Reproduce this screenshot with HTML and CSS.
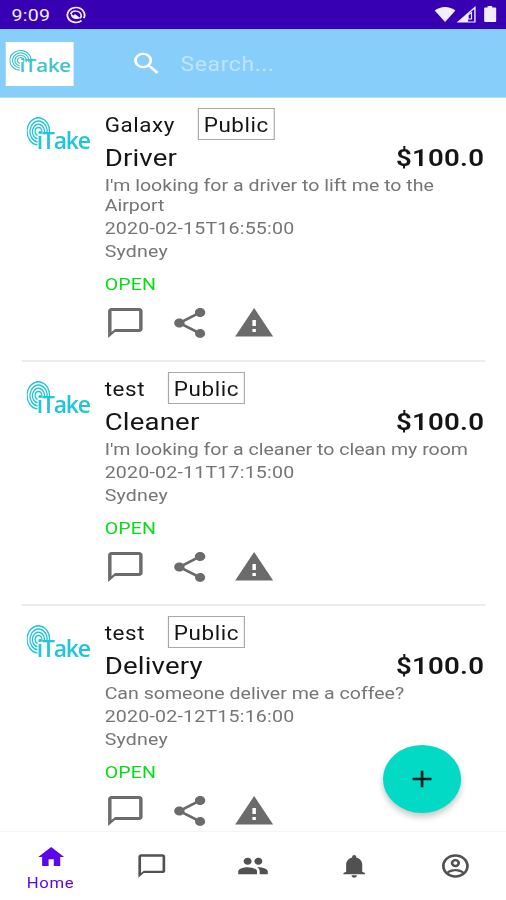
FILE: index.html
```html
<!DOCTYPE html>
<html lang="en">
<head>
<meta charset="utf-8">
<title>iTake</title>
<link rel="stylesheet" href="styles.css">
</head>
<body>
<svg class="defs" aria-hidden="true">
  <symbol id="chat" viewBox="0 0 24 24"><path d="M20 2H4c-1.100 0-2 .9-2 2v18l4-4h14c1.100 0 2-.9 2-2V4c0-1.100-.9-2-2-2zm0 14H6l-2 2V4h16v12z"/></symbol>
  <symbol id="share" viewBox="0 0 24 24"><path d="M18 16.080c-.76 0-1.440.3-1.960.77L8.910 12.700c.05-.23.09-.46.09-.7s-.04-.47-.09-.7l7.050-4.110c.54.5 1.250.81 2.040.81 1.660 0 3-1.340 3-3s-1.340-3-3-3-3 1.340-3 3c0 .24.04.47.09.7L8.040 9.810C7.500 9.310 6.790 9 6 9c-1.660 0-3 1.340-3 3s1.340 3 3 3c.79 0 1.500-.31 2.040-.81l7.120 4.160c-.05.21-.08.43-.08.65 0 1.610 1.310 2.920 2.920 2.920s2.920-1.310 2.920-2.920-1.310-2.920-2.920-2.920z"/></symbol>
  <symbol id="warning" viewBox="0 0 24 24"><path d="M1 21h22L12 2 1 21zm12-3h-2v-2h2v2zm0-4h-2v-4h2v4z"/></symbol>
  <symbol id="rings" viewBox="0 0 24 24" preserveAspectRatio="none"><g fill="none" stroke="currentColor" stroke-width="1.300"><path d="M11 23A11.200 11.200 0 1 1 22.800 14"/><path d="M11 20.500A8.600 8.600 0 1 1 20.400 14"/><path d="M11 18A6 6 0 1 1 17.600 14"/><path d="M11 15.300A3.400 3.400 0 1 1 15 13.600"/></g></symbol>
</svg>
<div class="screen">
  <header class="status">
    <span class="time">9:09</span>
    <svg class="dnd" viewBox="0 0 20 20"><path d="M15.500 16.200A8.300 8.300 0 1 1 17.600 13.400M10 18.300a8.300 8.300 0 0 0 5.500-2.100" fill="none" stroke="currentColor" stroke-width="1.800"/><path d="M5 8.800C6.500 4.500 13.500 4.500 15 9.500c.5 1.500 0 3-1 4" fill="none" stroke="currentColor" stroke-width="1.600"/><path d="M5 8.500l3 2 1-1.500 5.500 4.500-3 1C8 15 5 12.500 5 8.500z" fill="currentColor"/></svg>
    <svg class="signals" viewBox="0 0 54 18"><path d="M0 4.500C5-.2 13-.2 18 4.500L9 16z" fill="currentColor"/><path d="M35 1.500V16H20.500z" fill="none" stroke="currentColor" stroke-width="1.200"/><path d="M29 7.500V16h-8.500z" fill="currentColor"/><path d="M29 9l3-2.500V13h-3z" fill="none" stroke="currentColor"/><path d="M46 0h4v1.500h2.500q1 0 1 1V15q0 1-1 1H44q-1 0-1-1V2.500q0-1 1-1h2z" fill="currentColor"/></svg>
  </header>
  <div class="appbar">
    <div class="brand"><div class="logo"><svg><use href="#rings"/></svg><span>iTake</span></div></div>
    <svg class="search-icon" viewBox="0 0 24 24"><path d="M15.500 14h-.79l-.28-.27A6.471 6.471 0 0 0 16 9.500 6.500 6.500 0 1 0 9.500 16c1.610 0 3.090-.59 4.230-1.570l.27.28v.79l5 4.990L20.490 19l-4.990-5zm-6 0C7.010 14 5 11.990 5 9.500S7.010 5 9.500 5 14 7.010 14 9.500 11.990 14 9.500 14z"/></svg>
    <span class="search">Search...</span>
  </div>
  <main class="feed">
    <article class="card">
      <div class="logo"><svg><use href="#rings"/></svg><span>iTake</span></div>
      <div class="content">
        <div class="head"><span class="user">Galaxy</span><span class="badge">Public</span></div>
        <div class="title"><span>Driver</span><strong>$100.0</strong></div>
        <p class="desc">I'm looking for a driver to lift me to the<br>Airport</p>
        <p class="meta">2020-02-15T16:55:00</p>
        <p class="meta">Sydney</p>
        <p class="state">OPEN</p>
        <div class="actions"><svg><use href="#chat"/></svg><svg><use href="#share"/></svg><svg><use href="#warning"/></svg></div>
      </div>
    </article>
    <article class="card">
      <div class="logo"><svg><use href="#rings"/></svg><span>iTake</span></div>
      <div class="content">
        <div class="head"><span class="user">test</span><span class="badge">Public</span></div>
        <div class="title"><span>Cleaner</span><strong>$100.0</strong></div>
        <p class="desc">I'm looking for a cleaner to clean my room</p>
        <p class="meta">2020-02-11T17:15:00</p>
        <p class="meta">Sydney</p>
        <p class="state">OPEN</p>
        <div class="actions"><svg><use href="#chat"/></svg><svg><use href="#share"/></svg><svg><use href="#warning"/></svg></div>
      </div>
    </article>
    <article class="card">
      <div class="logo"><svg><use href="#rings"/></svg><span>iTake</span></div>
      <div class="content">
        <div class="head"><span class="user">test</span><span class="badge">Public</span></div>
        <div class="title"><span>Delivery</span><strong>$100.0</strong></div>
        <p class="desc">Can someone deliver me a coffee?</p>
        <p class="meta">2020-02-12T15:16:00</p>
        <p class="meta">Sydney</p>
        <p class="state">OPEN</p>
        <div class="actions"><svg><use href="#chat"/></svg><svg><use href="#share"/></svg><svg><use href="#warning"/></svg></div>
      </div>
    </article>
  </main>
  <div class="fab"><svg viewBox="0 0 24 24"><path d="M19 13h-6v6h-2v-6H5v-2h6V5h2v6h6v2z"/></svg></div>
  <nav class="nav">
    <div class="tab active"><svg viewBox="0 0 24 24"><path d="M10 20v-6h4v6h5v-8h3L12 3 2 12h3v8z"/></svg><span>Home</span></div>
    <div class="tab"><svg><use href="#chat"/></svg></div>
    <div class="tab"><svg viewBox="0 0 24 24"><path d="M16 11c1.660 0 2.990-1.340 2.990-3S17.660 5 16 5s-3 1.340-3 3 1.340 3 3 3zm-8 0c1.660 0 2.990-1.340 2.990-3S9.660 5 8 5 5 6.340 5 8s1.340 3 3 3zm0 2c-2.330 0-7 1.170-7 3.500V19h14v-2.500C15 14.170 10.330 13 8 13zm8 0c-.29 0-.62.02-.97.05 1.160.84 1.970 1.970 1.970 3.450V19h6v-2.500c0-2.330-4.670-3.500-7-3.500z"/></svg></div>
    <div class="tab"><svg viewBox="0 0 24 24"><path d="M12 22c1.100 0 2-.9 2-2h-4c0 1.100.89 2 2 2zm6-4v-7c0-3.070-1.640-5.640-4.500-6.320V4c0-.83-.67-1.500-1.500-1.500s-1.500.67-1.500 1.500v.68C7.630 5.360 6 7.920 6 11v6l-2 1v1h16v-1l-2-1z"/></svg></div>
    <div class="tab"><svg viewBox="0 0 24 24"><path fill-rule="evenodd" d="M12 2a10 10 0 1 0 0 20 10 10 0 0 0 0-20zM7.070 18.280c.43-.9 3.050-1.780 4.930-1.780s4.510.88 4.930 1.780A7.893 7.893 0 0 1 12 20c-1.860 0-3.570-.64-4.930-1.720zm11.290-1.450c-1.430-1.740-4.900-2.330-6.360-2.330s-4.930.59-6.360 2.330A7.950 7.950 0 0 1 4 12c0-4.410 3.590-8 8-8s8 3.590 8 8c0 1.820-.62 3.490-1.640 4.830zM12 6a3.500 3.500 0 1 0 0 7 3.500 3.500 0 0 0 0-7zm0 5a1.500 1.500 0 1 1 0-3 1.500 1.500 0 0 1 0 3z"/></svg></div>
  </nav>
</div>
</body>
</html>
```

FILE: styles.css
```css
* { box-sizing: border-box; }
body { margin: 0; overflow: hidden; background: #fff; font-family: Roboto, "Liberation Sans", sans-serif; color: #151515; }
p { margin: 0; }
svg { fill: currentColor; display: block; flex: none; }
.defs { display: none; }

.screen { position: relative; width: 440px; height: 900px; display: flex; flex-direction: column; overflow: hidden; transform: scaleX(1.15); transform-origin: 0 0; }

.status { height: 29px; flex: none; display: flex; align-items: center; padding: 0 8px 0 10px; background: #3700b3; color: #f2edff; }
.time { font-size: 17px; line-height: 29px; letter-spacing: .2px; padding-top: 2px; }
.dnd { width: 18px; height: 18px; margin-left: 13px; }
.signals { width: 54px; height: 18px; margin-left: auto; margin-top: 1px; }

.appbar { height: 69px; flex: none; display: flex; align-items: center; padding-left: 5px; background: #87cefa; border-bottom: 1px solid #b9def5; }
.brand { width: 59px; height: 44px; margin-top: 1px; background: #fff; display: flex; align-items: flex-start; padding: 8px 0 0 3px; color: #3fc4cc; }
.search-icon { width: 29px; height: 29px; margin-left: 49px; color: #fff; }
.search { margin-left: 15px; padding-top: 2px; font-size: 20px; letter-spacing: .5px; color: #bfe4fb; }

.logo { display: flex; align-items: flex-start; font-family: "Open Sans", "Noto Sans", sans-serif; font-weight: 600; }
.logo svg { width: 21px; height: 29px; }
.logo span { font-size: 20px; line-height: 24px; margin: 12px 0 0 -12px; letter-spacing: -1.100px; transform: scaleY(1.15); }
.brand .logo svg { width: 20px; height: 21px; }
.brand .logo span { font-size: 18px; margin: 3px 0 0 -11px; letter-spacing: -.4px; transform: none; }

.feed { flex: 1; min-height: 0; overflow: hidden; padding: 0 18px 0 19px; }
.card { display: flex; height: 244px; padding-top: 10px; border-bottom: 2px solid #ececec; }
.card:first-child { height: 264px; }
.card .logo { width: 72px; flex: none; padding: 9px 0 0 4px; color: #1fc6d9; }
.content { flex: 1; }
.head { display: flex; align-items: center; height: 32px; font-size: 19.500px; letter-spacing: .5px; }
.user { padding-top: 2px; }
.badge { height: 32px; line-height: 33px; padding: 0 4px; margin-left: 20px; border: 1px solid #a8a8a8; }
.title { display: flex; justify-content: space-between; height: 34px; line-height: 36px; font-size: 24px; letter-spacing: .15px; }
.title strong { font-weight: 600; letter-spacing: .2px; margin-right: 1px; }
.desc { font-size: 17px; line-height: 20px; margin: 1px 0; letter-spacing: 0; color: #757575; white-space: nowrap; }
.meta { position: relative; top: 1px; font-size: 17px; line-height: 23px; letter-spacing: .18px; color: #757575; }
.state { margin-top: 11px; font-size: 17px; line-height: 23px; letter-spacing: .1px; color: #08dc18; }
.actions { display: flex; gap: 20px; margin-top: 9px; color: #6b6b6b; }
.actions svg { width: 36px; height: 36px; }

.fab { position: absolute; left: 333px; top: 745px; width: 68px; height: 68px; border-radius: 50%; background: #03dac6; box-shadow: 0 4px 6px rgba(0,0,0,.22); display: flex; align-items: center; justify-content: center; color: #061c19; }
.fab svg { width: 28px; height: 28px; }

.nav { height: 69px; flex: none; display: flex; background: #fff; border-top: 1px solid #f4f4f4; }
.tab { flex: 1; display: flex; flex-direction: column; align-items: center; justify-content: center; color: #515151; }
.tab svg { width: 28px; height: 28px; }
.active { justify-content: flex-start; padding-top: 11px; color: #5a08e8; }
.active svg { width: 27px; }
.active span { font-size: 14.500px; line-height: 18px; letter-spacing: .6px; margin-top: 4px; }
```
